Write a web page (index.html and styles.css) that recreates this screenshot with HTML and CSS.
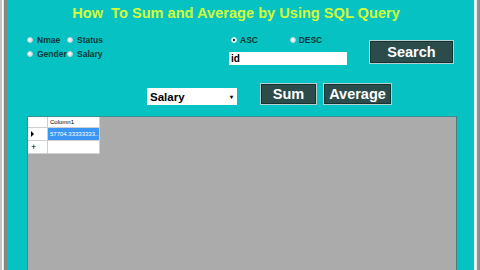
FILE: index.html
```html
<!DOCTYPE html>
<html>
<head>
<meta charset="utf-8">
<link rel="stylesheet" href="styles.css">
</head>
<body>
<div class="frame">
  <div class="frame-inner">
    <div class="form">
      <h1 class="title">How&nbsp; To Sum and Average by Using SQL Query</h1>
      <div class="controls">
        <div class="fields">
          <div class="radio-row">
            <label class="radio"><span class="dot"></span>Nmae</label>
            <label class="radio"><span class="dot"></span>Status</label>
          </div>
          <div class="radio-row">
            <label class="radio"><span class="dot"></span>Gender</label>
            <label class="radio"><span class="dot"></span>Salary</label>
          </div>
        </div>
        <div class="order">
          <div class="radio-row">
            <label class="radio radio-asc"><span class="dot checked"></span>ASC</label>
            <label class="radio"><span class="dot"></span>DESC</label>
          </div>
          <div class="textbox">id</div>
        </div>
        <div class="btn btn-search">Search</div>
      </div>
      <div class="actions">
        <div class="select"><span>Salary</span><span class="arrow">▾</span></div>
        <div class="btn btn-sum">Sum</div>
        <div class="btn btn-avg">Average</div>
      </div>
      <div class="grid">
        <div class="table">
          <div class="trow trow-head">
            <div class="rh"></div>
            <div class="cell">Column1</div>
          </div>
          <div class="trow">
            <div class="rh"><span class="tri"></span></div>
            <div class="cell cell-sel">57704.33333333...</div>
          </div>
          <div class="trow">
            <div class="rh plus">+</div>
            <div class="cell"></div>
          </div>
        </div>
      </div>
    </div>
  </div>
</div>
</body>
</html>
```

FILE: styles.css
```css
html, body {
  margin: 0;
  padding: 0;
  width: 480px;
  height: 270px;
  overflow: hidden;
  background: #8a8a8a;
  font-family: "Liberation Sans", Arial, sans-serif;
}

.frame {
  height: 270px;
  border-left: 2px solid #c4c4c4;
  border-right: 2px solid #8c8c8c;
  box-sizing: border-box;
  background: #dcdcdc;
}

.frame-inner {
  height: 270px;
  border-left: 1px solid #ffffff;
  border-right: 1px solid #9a9a9a;
  box-sizing: border-box;
  padding-left: 1px;
  padding-right: 1px;
  background: #e6e6e6;
}

.form {
  height: 270px;
  box-sizing: border-box;
  border-left: 3px solid #858585;
  border-right: 2px solid #e4ffff;
  background: #06c2c2;
  padding-left: 20px;
  padding-right: 17px;
  overflow: hidden;
}

.title {
  margin: 0;
  padding-top: 4px;
  height: 33px;
  box-sizing: border-box;
  line-height: 18px;
  font-size: 14.6px;
  font-weight: bold;
  color: #d4ff3a;
  text-align: center;
  padding-right: 12px;
}

.controls {
  display: flex;
  align-items: flex-start;
  height: 50px;
}

.fields {
  width: 202px;
}

.radio-row {
  display: flex;
  height: 14px;
  align-items: center;
}

.radio {
  display: flex;
  align-items: center;
  gap: 4px;
  width: 40px;
  height: 14px;
  font-size: 8.5px;
  font-weight: bold;
  color: #0e3838;
  white-space: nowrap;
}

.order .radio {
  width: 78px;
  padding-left: 2px;
  gap: 3px;
}

.order .radio-asc {
  width: 77px;
}

.dot {
  width: 6px;
  height: 6px;
  border-radius: 50%;
  background: radial-gradient(circle at 40% 40%, #ffffff 0%, #e4eef2 50%, #b9cbd2 100%);
  box-sizing: border-box;
  border: 1px solid #c9d8dc;
  flex: none;
}

.dot.checked {
  background: radial-gradient(circle, #1d3a3a 0%, #1d3a3a 35%, #e8f0f2 45%, #ffffff 100%);
  border-color: #dce8ea;
}

.order {
  width: 118px;
}

.textbox {
  margin-top: 5px;
  height: 13px;
  background: #ffffff;
  font-size: 10px;
  font-weight: bold;
  line-height: 13px;
  padding-left: 2px;
  color: #000;
}

.btn {
  box-sizing: border-box;
  background: #2c4c4c;
  color: #ffffff;
  border: 1px solid #b5cfcf;
  box-shadow: inset 0 0 0 1px #163232;
  font-weight: bold;
  text-align: center;
}

.btn-search {
  margin-left: 22px;
  margin-top: 7px;
  width: 85px;
  height: 24px;
  font-size: 14.5px;
  line-height: 22px;
}

.actions {
  display: flex;
  align-items: flex-end;
  margin-top: 0;
  padding-left: 120px;
  height: 22px;
}

.select {
  display: flex;
  justify-content: space-between;
  align-items: center;
  width: 90px;
  height: 17px;
  box-sizing: border-box;
  background: #ffffff;
  padding: 0 4px 0 3px;
  font-size: 11.5px;
  font-weight: bold;
  color: #000;
}

.select .arrow {
  font-size: 6px;
}

.btn-sum {
  margin-left: 23px;
  width: 57px;
  height: 22px;
  font-size: 14.5px;
  line-height: 20px;
}

.btn-avg {
  margin-left: 6px;
  width: 69px;
  height: 22px;
  font-size: 14.5px;
  line-height: 20px;
}

.grid {
  margin-top: 11px;
  height: 170px;
  background: #ababab;
  border: 1px solid #3d8f8f;
  border-right-color: #4a7d7d;
}

.table {
  display: inline-block;
  background: #ffffff;
}

.trow {
  display: flex;
  height: 12px;
  border-bottom: 1px solid #cfcfcf;
}

.trow-head {
  height: 10px;
}

.rh {
  width: 20px;
  border-right: 1px solid #cfcfcf;
  display: flex;
  align-items: center;
  padding-left: 3px;
  box-sizing: border-box;
  font-size: 8px;
  color: #000;
}

.rh.plus {
  font-size: 9px;
}

.tri {
  width: 0;
  height: 0;
  border-left: 3px solid #000;
  border-top: 3px solid transparent;
  border-bottom: 3px solid transparent;
}

.cell {
  width: 52px;
  border-right: 1px solid #cfcfcf;
  font-size: 6px;
  color: #000;
  padding-left: 2px;
  box-sizing: border-box;
  display: flex;
  align-items: center;
  white-space: nowrap;
  overflow: hidden;
}

.cell-sel {
  background: #3a96f0;
  color: #ffffff;
}
```
